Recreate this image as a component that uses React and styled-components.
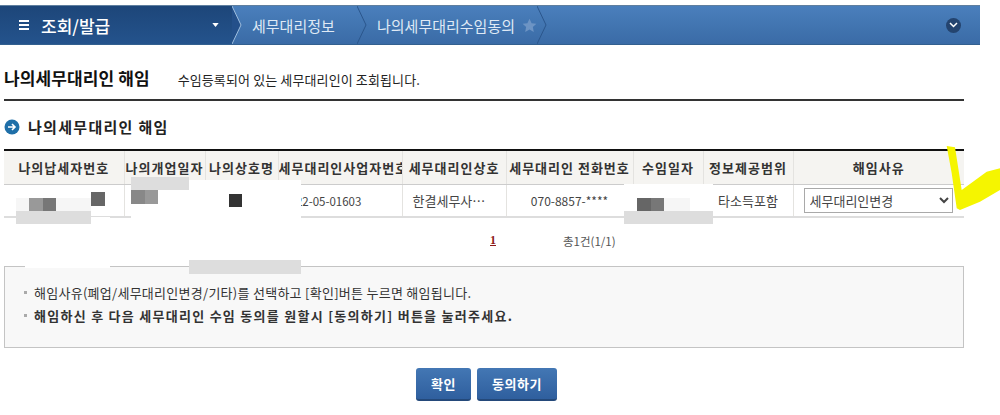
import React from "react";
import styled, { createGlobalStyle } from "styled-components";

const GlobalStyle = createGlobalStyle`
  html, body {
    margin: 0;
    padding: 0;
    background: #fff;
  }
  body {
    font-family: "Noto Sans CJK KR", "Noto Sans", sans-serif;
    font-size: 12px;
    color: #333;
  }
`;

const Page = styled.div`
  position: relative;
  width: 1000px;
  height: 415px;
  overflow: hidden;
  padding-top: 5px;
  box-sizing: border-box;
`;

const Nav = styled.div`
  display: flex;
  align-items: stretch;
  width: 980px;
  height: 40px;
  background: linear-gradient(#4a7fbc, #3a6ba6);
  border-top: 1px solid #5f7f9f;
  border-bottom: 1px solid #33608f;
  box-sizing: border-box;
`;

const MenuHead = styled.div`
  display: flex;
  align-items: center;
  width: 232px;
  padding: 0 13px 0 18px;
  box-sizing: border-box;
  background: linear-gradient(#1d4679, #24538c);
  color: #fff;
  font-size: 17px;
  font-weight: 500;
`;

const MenuTitle = styled.span`
  flex: 1;
  margin-left: 10px;
`;

const Crumb = styled.div`
  display: flex;
  align-items: center;
  gap: 7px;
  padding-left: ${(p) => p.$pad}px;
  width: ${(p) => p.$width}px;
  box-sizing: border-box;
  color: #dfe9f5;
  font-size: 15px;
  white-space: nowrap;
`;

const Chevron = styled.svg`
  flex: none;
  width: 10px;
  height: 38px;
`;

const Toggle = styled.div`
  margin-left: auto;
  margin-right: 19px;
  align-self: center;
  width: 15px;
  height: 15px;
  border-radius: 50%;
  background: #24446f;
  display: flex;
  align-items: center;
  justify-content: center;
`;

const Content = styled.div`
  width: 960px;
  margin-left: 4px;
`;

const TitleRow = styled.div`
  display: flex;
  align-items: baseline;
  height: 56px;
  padding-top: 20px;
  box-sizing: border-box;
  border-bottom: 2px solid #333;
`;

const Title = styled.h1`
  margin: 0;
  font-size: 17px;
  font-weight: 700;
  color: #111;
  letter-spacing: 0.1px;
`;

const TitleNote = styled.span`
  margin-left: 28px;
  font-size: 13px;
  letter-spacing: 0.12px;
  color: #222;
`;

const SectionTitle = styled.h2`
  display: flex;
  align-items: center;
  gap: 8px;
  margin: 16px 0 13px;
  height: 19px;
  font-size: 15px;
  font-weight: 700;
  color: #222;
  letter-spacing: 1.3px;
`;

const Bullet = styled.svg`
  flex: none;
  width: 16px;
  height: 16px;
`;

const Table = styled.table`
  width: 960px;
  table-layout: fixed;
  border-collapse: collapse;
  border-top: 2px solid #111;
  border-bottom: 2px solid #ddd;
`;

const Th = styled.th`
  height: 33px;
  padding: 0;
  background: #f5f4f1;
  border-bottom: 1px solid #ccc;
  border-left: ${(p) => (p.$first ? "0" : "1px solid #e4e3e0")};
  font-size: 13px;
  font-weight: 700;
  letter-spacing: 1px;
  color: #333;
  text-align: center;
  white-space: nowrap;
  overflow: hidden;
`;

const Td = styled.td`
  height: 31px;
  padding: 0 0 0 ${(p) => p.$pad || 0}px;
  border-left: ${(p) => (p.$first ? "0" : "1px solid #e4e3e0")};
  font-size: ${(p) => p.$size || 13}px;
  color: #444;
  text-align: ${(p) => (p.$pad ? "left" : "center")};
  white-space: nowrap;
  overflow: hidden;
`;

const ReasonSelect = styled.select`
  display: block;
  width: 149px;
  height: 25px;
  margin-left: 10px;
  padding: 0 0 0 1px;
  background: #fff;
  border: 1px solid #a9a9a9;
  border-radius: 0;
  font-family: inherit;
  font-size: 13px;
  color: #444;
`;

const Pager = styled.div`
  display: flex;
  height: 48px;
  padding-bottom: 3px;
  box-sizing: border-box;
  align-items: center;
`;

const PageNum = styled.a`
  margin-left: 486px;
  font-family: "Liberation Serif", serif;
  font-size: 12px;
  font-weight: 700;
  color: #8b1a1a;
  text-decoration: underline;
`;

const PageTotal = styled.span`
  margin-left: 67px;
  font-size: 11.5px;
  color: #555;
`;

const Notice = styled.div`
  height: 82px;
  padding: 14px 19px 0;
  box-sizing: border-box;
  background: #f8f8f8;
  border: 1px solid #c4c4c4;
`;

const NoticeLine = styled.p`
  display: flex;
  align-items: center;
  height: 23px;
  margin: 0;
  font-size: 13px;
  font-weight: ${(p) => (p.$strong ? 700 : 400)};
  letter-spacing: ${(p) => (p.$strong ? 1.27 : 0.27)}px;
  color: #333;
  &::before {
    content: "";
    width: 3px;
    height: 3px;
    margin-right: 7px;
    background: #aaa;
  }
`;

const Buttons = styled.div`
  display: flex;
  justify-content: center;
  gap: 6px;
  margin-top: 20px;
  padding-left: 5px;
`;

const Button = styled.button`
  width: ${(p) => p.$width}px;
  height: 33px;
  padding: 0;
  border: 0;
  border-bottom: 2px solid #24497a;
  border-radius: 3px;
  background: linear-gradient(#4377b4, #2f5f9e);
  color: #fff;
  font-family: inherit;
  font-size: 13px;
  font-weight: 700;
  letter-spacing: 0.6px;
`;

/* 개인정보 가림 패치 */
const Patch = styled.div`
  position: absolute;
  left: ${(p) => p.$x}px;
  top: ${(p) => p.$y}px;
  width: ${(p) => p.$w}px;
  height: ${(p) => p.$h}px;
  background: ${(p) => p.$c || "#fff"};
`;

const CheckMark = styled.svg`
  position: absolute;
  left: 940px;
  top: 140px;
  width: 60px;
  height: 80px;
`;

const columns = [120, 81, 73, 124, 104, 127, 70, 90, 171];
const headers = [
  "나의납세자번호",
  "나의개업일자",
  "나의상호명",
  "세무대리인사업자번호",
  "세무대리인상호",
  "세무대리인 전화번호",
  "수임일자",
  "정보제공범위",
  "해임사유",
];

const patches = [
  [25, 217, 85, 51],
  [16, 198, 75, 13, "#f6f6f6"],
  [29, 198, 14, 13, "#999"],
  [43, 198, 13, 13, "#777"],
  [91, 192, 14, 14, "#666"],
  [16, 211, 75, 13, "#ddd"],
  [131, 180, 170, 86],
  [131, 177, 58, 13, "#ddd"],
  [131, 190, 14, 14, "#888"],
  [145, 190, 13, 14, "#999"],
  [229, 194, 13, 13, "#333"],
  [189, 260, 112, 14, "#ddd"],
  [624, 184, 89, 27],
  [637, 198, 14, 13, "#666"],
  [651, 198, 13, 13, "#777"],
  [664, 198, 26, 13, "#f6f6f6"],
  [624, 211, 89, 13, "#ddd"],
];

function ChevronMark({ fill, stroke }) {
  return (
    <Chevron viewBox="0 0 10 38" preserveAspectRatio="none">
      <path d="M0 0 L9 19 L0 38 Z" fill={fill} />
      <path d="M0 0 L9 19 L0 38" fill="none" stroke={stroke} strokeWidth="1" />
    </Chevron>
  );
}

export default function App() {
  return (
    <>
      <GlobalStyle />
      <Page>
        <Nav>
          <MenuHead>
            <svg width="13" height="12" viewBox="0 0 13 12">
              <path d="M1 2h10M1 6h10M1 10h10" stroke="#fff" strokeWidth="2" />
            </svg>
            <MenuTitle>조회/발급</MenuTitle>
            <svg width="7" height="4" viewBox="0 0 8 5">
              <path d="M0 0h8L4 5z" fill="#fff" />
            </svg>
          </MenuHead>
          <ChevronMark fill="#24508a" stroke="#9fbede" />
          <Crumb $pad={10} $width={115}>세무대리정보</Crumb>
          <ChevronMark fill="none" stroke="#2b568c" />
          <Crumb $pad={10} $width={170}>
            나의세무대리수임동의
            <svg width="15" height="15" viewBox="0 0 24 24">
              <path d="M12 1l3.4 7.2 7.6 1-5.6 5.3 1.5 7.8L12 18.5l-6.9 3.8 1.5-7.8L1 9.2l7.6-1z" fill="#6d94c4" />
            </svg>
          </Crumb>
          <ChevronMark fill="none" stroke="#2b568c" />
          <Toggle>
            <svg width="9" height="6" viewBox="0 0 9 6">
              <path d="M1 1l3.5 3.5L8 1" fill="none" stroke="#fff" strokeWidth="1.5" />
            </svg>
          </Toggle>
        </Nav>

        <Content>
          <TitleRow>
            <Title>나의세무대리인 해임</Title>
            <TitleNote>수임등록되어 있는 세무대리인이 조회됩니다.</TitleNote>
          </TitleRow>

          <SectionTitle>
            <Bullet viewBox="0 0 16 16">
              <circle cx="8" cy="8" r="7.5" fill="#1f6fa8" />
              <path d="M4 8h7M8 5l3 3-3 3" fill="none" stroke="#fff" strokeWidth="1.6" />
            </Bullet>
            나의세무대리인 해임
          </SectionTitle>

          <Table>
            <colgroup>
              {columns.map((w, i) => (
                <col key={i} style={{ width: w }} />
              ))}
            </colgroup>
            <thead>
              <tr>
                {headers.map((h, i) => (
                  <Th key={h} $first={i === 0}>{h}</Th>
                ))}
              </tr>
            </thead>
            <tbody>
              <tr>
                <Td $first />
                <Td />
                <Td />
                <Td $pad={11} $size={11.5}>122-05-01603</Td>
                <Td $pad={10}>한결세무사…</Td>
                <Td $size={12}>070-8857-****</Td>
                <Td />
                <Td>타소득포함</Td>
                <Td>
                  <ReasonSelect defaultValue="세무대리인변경">
                    <option>폐업</option>
                    <option>세무대리인변경</option>
                    <option>기타</option>
                  </ReasonSelect>
                </Td>
              </tr>
            </tbody>
          </Table>

          <Pager>
            <PageNum>1</PageNum>
            <PageTotal>총1건(1/1)</PageTotal>
          </Pager>

          <Notice>
            <NoticeLine>해임사유(폐업/세무대리인변경/기타)를 선택하고 [확인]버튼 누르면 해임됩니다.</NoticeLine>
            <NoticeLine $strong>해임하신 후 다음 세무대리인 수임 동의를 원할시 [동의하기] 버튼을 눌러주세요.</NoticeLine>
          </Notice>

          <Buttons>
            <Button $width={55}>확인</Button>
            <Button $width={80}>동의하기</Button>
          </Buttons>
        </Content>

        {patches.map(([x, y, w, h, c], i) => (
          <Patch key={i} $x={x} $y={y} $w={w} $h={h} $c={c} />
        ))}

        <CheckMark viewBox="0 0 60 80">
          <path d="M6.7 6 L15 7.3 L21.7 50 L46.7 31.7 L60 28.3 L60 50 L40 61.7 L20 70 L16.7 68.3 L11.7 33.3 Z" fill="#f5f500" />
        </CheckMark>
      </Page>
    </>
  );
}
